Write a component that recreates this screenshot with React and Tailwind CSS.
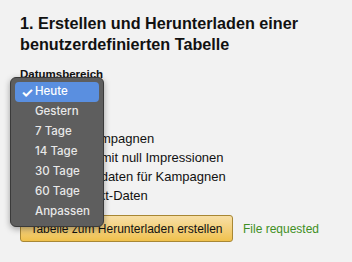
export default function App() {
  const items = ["Heute", "Gestern", "7 Tage", "14 Tage", "30 Tage", "60 Tage", "Anpassen"];
  const box = "inline-block shrink-0 w-[13px] h-[13px] border border-[#888] bg-white rounded-[2px]";
  return (
    <div className="relative w-[352px] h-[262px] overflow-hidden bg-[#f2f2f2] text-[#111111]" style={{ fontFamily: '"Liberation Sans", Arial, sans-serif' }}>
      <div className="pl-[20px] pt-[13px]">
        <h1 className="text-[16.2px] leading-[21px] font-bold w-[300px]">1. Erstellen und Herunterladen einer benutzerdefinierten Tabelle</h1>
        <div className="mt-[12px] text-[11.5px] leading-[14px] font-bold">Datumsbereich</div>
        <div className="mt-[8px] h-[24px] w-[100px]"></div>
        <div className="mt-[16px] flex flex-col text-[13px] leading-[19px] whitespace-nowrap">
          <div className="flex items-center gap-[6px]"><span className={box}></span><span className="ml-[-20px]">Archivierte Kampagnen</span></div>
          <div className="flex items-center gap-[6px]"><span className={box}></span><span className="ml-[-12px]">Kampagnen mit null Impressionen</span></div>
          <div className="flex items-center gap-[6px]"><span className={box}></span><span className="ml-[6px]">Leistungsdaten für Kampagnen</span></div>
          <div className="flex items-center gap-[6px]"><span className={box}></span><span className="ml-[25px]">Produkt-Daten</span></div>
        </div>
        <div className="mt-[10px] flex items-center gap-[10px]">
          <button className="h-[27px] w-[213px] rounded-[3px] border border-[#a88734] bg-gradient-to-b from-[#f7dfa5] to-[#f0c14b] text-[12px] text-[#111] whitespace-nowrap">Tabelle zum Herunterladen erstellen</button>
          <span className="text-[12px] text-[#3f8f24]">File requested</span>
        </div>
      </div>

      <div className="absolute left-[10px] top-[77px] w-[94px] rounded-[6px] border border-[#3a3a3a] bg-[#5e5e5e] p-[4px] shadow-[0_2px_6px_rgba(0,0,0,0.35)]" style={{ fontFamily: 'Inter, "Noto Sans", sans-serif' }}>
        {items.map((it, i) => (
          <div key={it} className={"relative h-[20px] flex items-center pl-[20px] text-[11.5px] font-medium rounded-[4px] " + (i === 0 ? "bg-[#5a8fe0] text-white" : "text-[#e8e8e8]")}>
            {i === 0 && <span className="absolute left-[6px] top-[0px] text-[14px] font-bold">✓</span>}
            {it}
          </div>
        ))}
      </div>
    </div>
  );
}
